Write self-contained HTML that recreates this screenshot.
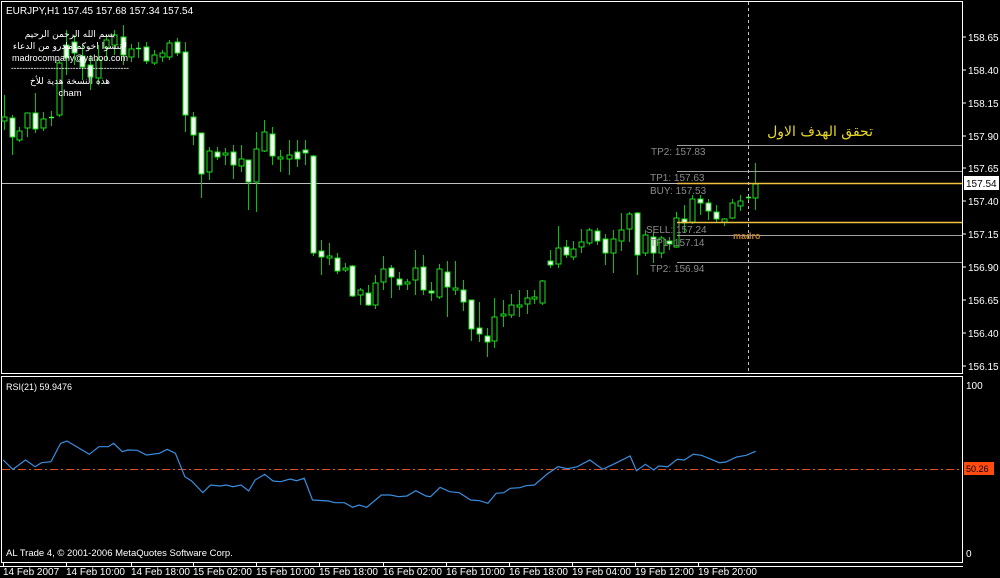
<!DOCTYPE html>
<html><head><meta charset="utf-8"><style>
html,body{margin:0;padding:0;background:#000;width:1000px;height:578px;overflow:hidden}
svg{display:block}
text{font-family:"Liberation Sans","DejaVu Sans",sans-serif;font-size:10px}
</style></head><body>
<svg id="s" width="1000" height="578" xmlns="http://www.w3.org/2000/svg">
<rect width="1000" height="578" fill="#000"/>
<rect x="1.5" y="1.5" width="961" height="372" fill="none" stroke="#fff" stroke-width="1"/>
<rect x="1.5" y="376.5" width="961" height="186" fill="none" stroke="#fff" stroke-width="1"/>
<line x1="0" y1="566.5" x2="963" y2="566.5" stroke="#fff"/>
<line x1="2" y1="183.5" x2="962" y2="183.5" stroke="#c0c0c0"/>
<g id="candles"></g>
<line x1="677" y1="145.5" x2="962" y2="145.5" stroke="#a0a0a0"/>
<line x1="677" y1="171.5" x2="962" y2="171.5" stroke="#a0a0a0"/>
<line x1="677" y1="183.5" x2="962" y2="183.5" stroke="#f0c040" stroke-width="1.5"/>
<line x1="677" y1="222.5" x2="962" y2="222.5" stroke="#f0c040" stroke-width="1.5"/>
<line x1="677" y1="235.5" x2="962" y2="235.5" stroke="#a0a0a0"/>
<line x1="677" y1="262.5" x2="962" y2="262.5" stroke="#a0a0a0"/>
<line x1="748.5" y1="2" x2="748.5" y2="373" stroke="#c0c0c0" stroke-dasharray="3,3"/>
<g fill="#8a8a8a">
<text x="651" y="155">TP2: 157.83</text>
<text x="650" y="181">TP1: 157.63</text>
<text x="650" y="194">BUY: 157.53</text>
<text x="646" y="233">SELL: 157.24</text>
<text x="650" y="246">TP1: 157.14</text>
<text x="650" y="272">TP2: 156.94</text>
</g>
<text x="733" y="239" fill="#c08030" style="font-size:9px;font-weight:bold">madro</text>
<text x="873" y="136" fill="#e8d820" text-anchor="end" style="font-size:14px;font-family:'DejaVu Sans',sans-serif">تحقق الهدف الاول</text>
<text x="6" y="14" fill="#fff" style="font-size:10px">EURJPY,H1  157.45 157.68 157.34 157.54</text>
<g fill="#fff" text-anchor="middle">
<text x="70" y="37" style="font-family:'DejaVu Sans',sans-serif;font-size:9px">بسم الله الرحمن الرحيم</text>
<text x="70" y="49" style="font-family:'DejaVu Sans',sans-serif;font-size:9px">لاتنسوا اخوكم مادرو من الدعاء</text>
<text x="70" y="61" style="font-size:9.5px" textLength="116" lengthAdjust="spacingAndGlyphs">madrocompany@yahoo.com</text>
<text x="70" y="71" style="font-size:9px" textLength="118" lengthAdjust="spacingAndGlyphs">------------------------------------------</text>
<text x="70" y="84" style="font-family:'DejaVu Sans',sans-serif;font-size:9px">هذه النسخة هدية للأخ</text>
<text x="70" y="96" style="font-size:9.5px">cham</text>
</g>
<g fill="#fff" style="font-size:9.5px">
<text x="968" y="41">158.65</text><text x="968" y="74">158.40</text><text x="968" y="107">158.15</text>
<text x="968" y="140">157.90</text><text x="968" y="172">157.65</text><text x="968" y="205">157.40</text>
<text x="968" y="238">157.15</text><text x="968" y="271">156.90</text><text x="968" y="304">156.65</text>
<text x="968" y="337">156.40</text><text x="968" y="370">156.15</text>
<text x="966" y="389">100</text><text x="966" y="557">0</text>
</g>
<g stroke="#fff">
<line x1="963" y1="37" x2="966" y2="37"/><line x1="963" y1="70" x2="966" y2="70"/><line x1="963" y1="103" x2="966" y2="103"/>
<line x1="963" y1="136" x2="966" y2="136"/><line x1="963" y1="168" x2="966" y2="168"/><line x1="963" y1="201" x2="966" y2="201"/>
<line x1="963" y1="234" x2="966" y2="234"/><line x1="963" y1="267" x2="966" y2="267"/><line x1="963" y1="300" x2="966" y2="300"/>
<line x1="963" y1="333" x2="966" y2="333"/><line x1="963" y1="366" x2="966" y2="366"/>
</g>
<rect x="964" y="176" width="35" height="14" fill="#fff"/>
<text x="966" y="187" fill="#000" style="font-size:10px">157.54</text>
<text x="6" y="390" fill="#fff" style="font-size:9px">RSI(21) 59.9476</text>
<line x1="2" y1="469.5" x2="962" y2="469.5" stroke="#e05020" stroke-dasharray="8,3,2,3"/>
<rect x="964" y="462" width="30" height="13" fill="#ff4a10"/>
<text x="966" y="472" fill="#000" style="font-size:9px">50.26</text>
<polyline id="rsi" fill="none" stroke="#3a8ee0" stroke-width="1.2" points=""/>
<text x="6" y="556" fill="#fff" style="font-size:9.5px">AL Trade 4, © 2001-2006 MetaQuotes Software Corp.</text>
<g fill="#fff" style="font-size:9.5px" id="taxis"></g>
</svg>
<script>
var C=[[4,95,130,117,121,0],[12,115,155,118,137,1],[19,127,142,131,140,0],[27,113,137,113,128,0],[35,93,133,113,129,1],[43,112,131,119,128,0],[51,111,126,117,118,0],[59,60,117,63,115,0],[66,30,75,45,58,1],[74,35,65,42,53,1],[82,45,80,56,67,1],[90,55,90,65,77,1],[98,45,85,60,78,0],[106,35,60,40,48,0],[114,30,55,35,45,0],[123,25,65,37,55,1],[131,44,62,49,57,0],[138,42,58,48,49,0],[146,42,64,47,61,1],[154,50,65,55,63,0],[162,50,62,53,57,0],[169,40,60,43,57,0],[177,38,56,42,53,1],[185,42,132,52,115,1],[193,112,145,117,135,1],[201,133,198,133,174,1],[209,147,180,151,172,0],[217,147,160,152,157,1],[225,148,165,153,155,0],[233,145,179,152,165,1],[241,145,172,159,166,0],[248,160,210,160,182,1],[256,132,212,149,182,0],[264,120,152,132,151,0],[272,127,165,134,156,1],[280,150,172,157,159,0],[289,140,175,155,159,0],[297,140,167,152,159,1],[305,140,165,150,153,1],[313,155,256,156,253,1],[321,240,275,251,257,1],[329,243,265,256,258,0],[337,253,274,258,271,1],[345,263,272,268,270,0],[352,265,297,266,296,1],[360,288,305,290,295,0],[368,285,306,293,305,1],[375,275,309,283,305,0],[383,256,290,269,282,0],[391,265,298,268,277,1],[399,272,290,279,285,1],[407,279,290,282,284,0],[415,250,295,268,280,0],[423,255,295,267,290,1],[431,282,301,291,293,1],[439,264,299,269,297,0],[447,261,317,272,287,1],[455,261,295,288,290,0],[463,280,311,290,302,1],[471,300,341,300,329,1],[479,302,342,328,334,1],[487,328,357,336,342,1],[494,298,348,317,341,0],[503,300,327,314,316,0],[511,294,318,305,315,0],[519,290,317,305,307,0],[527,290,314,298,304,0],[534,290,304,297,299,0],[542,280,305,281,303,0],[550,250,268,261,265,1],[558,226,268,248,264,0],[566,240,258,247,255,1],[573,241,260,249,257,0],[581,229,253,242,247,0],[589,228,245,230,243,0],[597,228,245,231,241,1],[605,234,265,239,253,1],[613,230,273,239,253,0],[621,213,251,230,241,0],[629,212,242,214,229,0],[637,212,275,213,255,1],[645,230,256,235,253,0],[653,232,263,237,253,1],[661,236,258,238,253,0],[669,237,250,241,244,1],[676,212,248,218,247,0],[684,205,233,219,223,1],[692,195,224,199,222,0],[700,195,215,199,203,1],[708,199,220,203,211,1],[716,205,222,212,219,1],[724,218,226,219,222,0],[732,199,219,203,218,0],[740,195,211,201,206,0],[748,195,202,197,198,0],[755,163,210,184,198,0]];
var g=document.getElementById('candles'),h='';
C.forEach(function(c){var x=c[0];h+='<line x1="'+(x+.5)+'" y1="'+c[1]+'" x2="'+(x+.5)+'" y2="'+c[2]+'" stroke="#00c800"/>';
var t=c[3],b=c[4];if(b-t<2){h+='<line x1="'+(x-2)+'" y1="'+(t+.5)+'" x2="'+(x+3)+'" y2="'+(t+.5)+'" stroke="#40ff40" stroke-width="1.5"/>';}
else h+='<rect x="'+(x-2)+'" y="'+t+'" width="5" height="'+(b-t)+'" fill="'+(c[5]?'#f4fff4':'#000')+'" stroke="#20e020" stroke-width="1"/>';});
g.innerHTML=h;
var P=[[5,270],[20,298],[40,270],[55,290],[65,278],[80,275],[95,220],[105,213],[140,253],[155,230],[170,230],[178,220],[192,245],[200,240],[215,241],[230,255],[250,250],[262,238],[275,250],[290,320],[300,332],[318,368],[330,345],[345,348],[355,345],[365,350],[378,345],[390,363],[400,330],[415,313],[428,333],[440,335],[455,327],[465,332],[477,325],[490,390],[515,393],[525,398],[540,398],[553,412],[563,405],[575,412],[598,375],[612,375],[625,380],[638,378],[652,362],[668,378],[675,380],[690,352],[705,365],[720,368],[738,390],[752,392],[765,400],[778,370],[790,368],[800,355],[815,353],[825,347],[838,345],[858,312],[875,290],[890,296],[905,290],[925,270],[945,298],[965,280],[988,258],[998,302],[1012,283],[1025,300],[1033,288],[1047,290],[1062,268],[1073,270],[1087,253],[1100,256],[1128,278],[1138,276],[1155,261],[1170,256],[1185,244]];
document.getElementById('rsi').setAttribute('points',P.map(function(p){return (p[0]/1.568).toFixed(1)+','+(370+p[1]/3).toFixed(1)}).join(' '));
var T=[[3,'14 Feb 2007'],[66,'14 Feb 10:00'],[131,'14 Feb 18:00'],[193,'15 Feb 02:00'],[256,'15 Feb 10:00'],[319,'15 Feb 18:00'],[383,'16 Feb 02:00'],[446,'16 Feb 10:00'],[509,'16 Feb 18:00'],[572,'19 Feb 04:00'],[635,'19 Feb 12:00'],[698,'19 Feb 20:00']],th='';
T.forEach(function(t){th+='<text x="'+t[0]+'" y="575">'+t[1]+'</text><line x1="'+(t[0]+.5)+'" y1="563" x2="'+(t[0]+.5)+'" y2="567" stroke="#fff"/>';});
document.getElementById('taxis').innerHTML=th;
</script>
</body></html>
